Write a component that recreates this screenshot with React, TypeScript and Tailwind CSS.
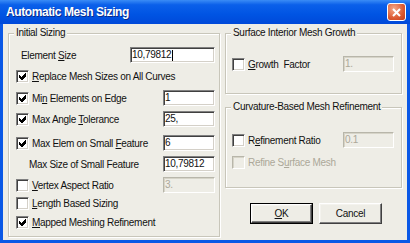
import React from "react";

const FACE = "bg-[#eeede6]";
const SUNKEN =
  "border border-t-[#808080] border-l-[#808080] border-b-white border-r-white shadow-[inset_1px_1px_0_#404040,inset_-1px_-1px_0_#d4d0c8]";
const SUNKEN_OFF =
  "border border-t-[#b8b6aa] border-l-[#b8b6aa] border-b-white border-r-white shadow-[inset_1px_1px_0_#d6d4c8]";

function Check({ checked, disabled }: { checked?: boolean; disabled?: boolean }) {
  return (
    <span
      className={`w-[13px] h-[13px] shrink-0 flex items-center justify-center ${
        disabled ? `${FACE} ${SUNKEN_OFF}` : `bg-white ${SUNKEN}`
      }`}
    >
      {checked && (
        <svg width="7" height="7" viewBox="0 0 7 7" shapeRendering="crispEdges">
          <polygon points="0,2 2,4 6,0 7,0 7,3 3,7 2,7 0,5" fill="#000" />
        </svg>
      )}
    </span>
  );
}

function TextBox({
  value,
  width,
  disabled,
  caret,
}: {
  value: string;
  width: string;
  disabled?: boolean;
  caret?: boolean;
}) {
  return (
    <div
      className={`${width} h-[16px] flex items-center pl-[1px] leading-none ${
        disabled ? `${FACE} ${SUNKEN_OFF} text-[#aca899]` : `bg-white ${SUNKEN}`
      }`}
    >
      <span>{value}</span>
      {caret && <span className="w-px h-[11px] bg-black ml-px" />}
    </div>
  );
}

function Group({
  title,
  className,
  children,
}: {
  title: string;
  className: string;
  children: React.ReactNode;
}) {
  return (
    <div
      className={`relative border border-[#c8c6ba] shadow-[inset_1px_1px_0_#fff,1px_1px_0_#fff] ${className}`}
    >
      <span className={`absolute -top-[7px] left-[5px] px-[2px] leading-[12px] ${FACE}`}>
        {title}
      </span>
      {children}
    </div>
  );
}

function CheckRow({
  checked,
  disabled,
  children,
}: {
  checked?: boolean;
  disabled?: boolean;
  children: React.ReactNode;
}) {
  return (
    <div className="flex items-center gap-[3px]">
      <Check checked={checked} disabled={disabled} />
      <span className={disabled ? "text-[#aca899]" : ""}>{children}</span>
    </div>
  );
}

function Button({ children, isDefault }: { children: React.ReactNode; isDefault?: boolean }) {
  return (
    <div className={`w-[63px] h-[21px] ${isDefault ? "border border-black" : ""}`}>
      <div className="w-full h-full flex items-center justify-center border border-t-white border-l-white border-b-[#404040] border-r-[#404040] shadow-[inset_-1px_-1px_0_#808080,inset_1px_1px_0_#f4f3ee]">
        {children}
      </div>
    </div>
  );
}

export default function App() {
  return (
    <div className="w-[410px] h-[243px] flex flex-col bg-[#0a58e6] text-[#111] font-['Liberation_Sans',Arial,sans-serif] text-[10px] tracking-[-0.3px] select-none">
      {/* title bar */}
      <div className="h-[24px] shrink-0 flex items-center pl-[6px] pr-[4px] bg-[linear-gradient(#3a8cf6_0%,#0b60ea_20%,#0054e3_60%,#0049d9_100%)]">
        <span className="text-white font-bold text-[12px] tracking-[-0.4px] [text-shadow:1px_1px_0_#0b2a8a]">
          Automatic Mesh Sizing
        </span>
        <div className="ml-auto w-[19px] h-[18px] rounded-[3px] border border-white flex items-center justify-center bg-[radial-gradient(circle_at_35%_30%,#f4a888,#dc5a32_60%,#c23c1a)]">
          <svg width="9" height="9" viewBox="0 0 9 9">
            <path d="M1 1 L8 8 M8 1 L1 8" stroke="#fff" strokeWidth="2" />
          </svg>
        </div>
      </div>

      {/* body */}
      <div className={`flex-1 mx-[3px] mb-[3px] ${FACE} flex gap-[5px] px-[5px]`}>
        <Group title="Initial Sizing" className="w-[212px] h-[204px] mt-[9px] pl-[7px] pr-[4px]">
          <div className="flex items-center h-[16px] mt-[13px]">
            <span className="pl-[5px]">
              Element <u>S</u>ize
            </span>
            <div className="ml-auto">
              <TextBox value="10,79812" width="w-[85px]" caret />
            </div>
          </div>
          <div className="flex items-center h-[16px] mt-[5px]">
            <CheckRow checked>
              <u>R</u>eplace Mesh Sizes on All Curves
            </CheckRow>
          </div>
          <div className="flex items-center h-[16px] mt-[6px]">
            <CheckRow checked>
              Mi<u>n</u> Elements on Edge
            </CheckRow>
            <div className="ml-auto">
              <TextBox value="1" width="w-[52px]" />
            </div>
          </div>
          <div className="flex items-center h-[16px] mt-[5px]">
            <CheckRow checked>
              Max Angle <u>T</u>olerance
            </CheckRow>
            <div className="ml-auto">
              <TextBox value="25," width="w-[52px]" />
            </div>
          </div>
          <div className="flex items-center h-[16px] mt-[8px]">
            <CheckRow checked>
              Max Elem on Small <u>F</u>eature
            </CheckRow>
            <div className="ml-auto">
              <TextBox value="6" width="w-[52px]" />
            </div>
          </div>
          <div className="flex items-center h-[16px] mt-[5px]">
            <span className="pl-[13px]">Max Size of Small Feature</span>
            <div className="ml-auto">
              <TextBox value="10,79812" width="w-[52px]" />
            </div>
          </div>
          <div className="flex items-center h-[16px] mt-[5px]">
            <CheckRow>
              <u>V</u>ertex Aspect Ratio
            </CheckRow>
            <div className="ml-auto">
              <TextBox value="3." width="w-[52px]" disabled />
            </div>
          </div>
          <div className="flex items-center h-[16px] mt-[2px]">
            <CheckRow>
              <u>L</u>ength Based Sizing
            </CheckRow>
          </div>
          <div className="flex items-center h-[16px] mt-[3px]">
            <CheckRow checked>
              <u>M</u>apped Meshing Refinement
            </CheckRow>
          </div>
        </Group>

        <div className="w-[177px] flex flex-col">
          <Group title="Surface Interior Mesh Growth" className="h-[61px] mt-[9px] pl-[6px] pr-[7px]">
            <div className="flex items-center h-[16px] mt-[22px]">
              <CheckRow>
                <u>G</u>rowth&nbsp; Factor
              </CheckRow>
              <div className="ml-auto">
                <TextBox value="1." width="w-[51px]" disabled />
              </div>
            </div>
          </Group>

          <Group title="Curvature-Based Mesh Refinement" className="h-[81px] mt-[13px] pl-[6px] pr-[7px]">
            <div className="flex items-center h-[16px] mt-[24px]">
              <CheckRow>
                R<u>e</u>finement Ratio
              </CheckRow>
              <div className="ml-auto">
                <TextBox value="0.1" width="w-[51px]" disabled />
              </div>
            </div>
            <div className="flex items-center h-[16px] mt-[6px]">
              <CheckRow disabled>
                Refine S<u>u</u>rface Mesh
              </CheckRow>
            </div>
          </Group>

          <div className="flex justify-end gap-[6px] pr-[20px] mt-[15px]">
            <Button isDefault>
              <u>O</u>K
            </Button>
            <Button>Cancel</Button>
          </div>
        </div>
      </div>
    </div>
  );
}
